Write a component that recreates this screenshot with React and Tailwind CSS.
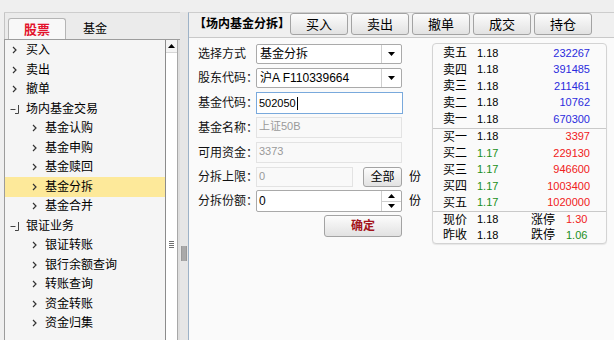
import React from 'react';

const tree = [
  { t: '买入', lvl: 1 },
  { t: '卖出', lvl: 1 },
  { t: '撤单', lvl: 1 },
  { t: '场内基金交易', lvl: 1, open: true },
  { t: '基金认购', lvl: 2 },
  { t: '基金申购', lvl: 2 },
  { t: '基金赎回', lvl: 2 },
  { t: '基金分拆', lvl: 2, sel: true },
  { t: '基金合并', lvl: 2 },
  { t: '银证业务', lvl: 1, open: true },
  { t: '银证转账', lvl: 2 },
  { t: '银行余额查询', lvl: 2 },
  { t: '转账查询', lvl: 2 },
  { t: '资金转账', lvl: 2 },
  { t: '资金归集', lvl: 2 },
];

const sells = [
  ['卖五', '1.18', '232267'],
  ['卖四', '1.18', '391485'],
  ['卖三', '1.18', '211461'],
  ['卖二', '1.18', '10762'],
  ['卖一', '1.18', '670300'],
];

const buys = [
  ['买一', '1.18', '3397', 'text-black'],
  ['买二', '1.17', '229130', 'text-[#1b8f1b]'],
  ['买三', '1.17', '946600', 'text-[#1b8f1b]'],
  ['买四', '1.17', '1003400', 'text-[#1b8f1b]'],
  ['买五', '1.17', '1020000', 'text-[#1b8f1b]'],
];

const Chevron = () => (
  <svg width="5" height="8" viewBox="0 0 5 8">
    <path d="M1 1 L4 4 L1 7" fill="none" stroke="#333" strokeWidth="1.2" />
  </svg>
);

const Collapse = () => (
  <svg width="10" height="10" viewBox="0 0 10 10">
    <path d="M0.5 5.5 H5.5 M8.5 1 V9.5 H5" fill="none" stroke="#444" strokeWidth="1" />
  </svg>
);

const TreeRow = ({ item }) => (
  <div className={`h-[19.5px] flex items-center text-[12px] text-black ${item.sel ? 'bg-[#fde99a]' : ''}`}>
    {item.lvl === 1 ? (
      <div className="w-[21px] flex items-center pl-[5px]">
        {item.open ? <Collapse /> : <span className="pl-[2px] flex"><Chevron /></span>}
      </div>
    ) : (
      <div className="w-[40px] flex items-center pl-[27px]">
        <Chevron />
      </div>
    )}
    <span className="leading-none">{item.t}</span>
  </div>
);

const Btn = ({ children, className = '' }) => (
  <button
    className={`rounded-[3px] border border-[#a3a3a3] bg-linear-to-b from-[#fcfcfc] to-[#e2e2e2] leading-none flex items-center justify-center ${className}`}
  >
    {children}
  </button>
);

const DownArrow = () => (
  <svg width="7" height="4" viewBox="0 0 7 4">
    <polygon points="0,0 7,0 3.5,4" fill="#000" />
  </svg>
);

const UpArrow = () => (
  <svg width="7" height="4" viewBox="0 0 7 4">
    <polygon points="0,4 7,4 3.5,0" fill="#000" />
  </svg>
);

const Select = ({ children }) => (
  <div className="w-[146px] h-[20px] flex border border-[#aaaaaa] rounded-[2px] bg-white">
    <div className="flex-1 flex items-center pl-[3px] text-[12px] leading-none">{children}</div>
    <div className="w-[20px] border-l border-[#cfcfcf] flex items-center justify-center">
      <DownArrow />
    </div>
  </div>
);

const Label = ({ children }) => (
  <div className="w-[58px] shrink-0 whitespace-nowrap text-[12px] leading-none text-[#111]">{children}</div>
);

const Dim = ({ children, w = 'w-[146px]' }) => (
  <div className={`${w} shrink-0 h-full border border-[#e3e3e3] bg-[#f9f9f9] text-[11px] text-[#9a9a9a] pl-[2px] pt-[3px] leading-none`}>
    {children}
  </div>
);

const QuoteRow = ({ label, price, vol, priceCls = 'text-black', volCls }) => (
  <div className="h-[16.5px] flex items-center pl-[10px] pr-[16px]">
    <span className="w-[34px] text-[12px] leading-none">{label}</span>
    <span className={`w-[40px] text-[11px] leading-none ${priceCls}`}>{price}</span>
    <span className={`flex-1 text-right text-[11px] leading-none ${volCls}`}>{vol}</span>
  </div>
);

export default function App() {
  return (
    <div className="w-[614px] h-[340px] bg-[#efefef] flex pt-[12px] pl-[4px] overflow-hidden font-['Liberation_Sans','Noto_Sans_CJK_SC',sans-serif]">
      {/* left: menu */}
      <div className="w-[176px] flex flex-col border-t border-[#cdcdcd]">
        <div className="h-[26px] bg-[#ebebeb] border-l border-[#c4c4c4] flex items-end pl-[3px]">
          <div className="w-[58px] h-[21px] rounded-t-[3px] border border-b-0 border-[#b5b5b5] bg-[#f8f8f8] flex items-center justify-center text-[13px] font-bold text-[#e3132c] leading-none">
            股票
          </div>
          <div className="w-[58px] h-[21px] flex items-center justify-center text-[12px] text-black leading-none">
            基金
          </div>
        </div>
        <div className="flex-1 flex border-t border-l border-[#9c9c9c]">
          <div className="w-[160px] bg-[#f5f5f5] pt-[0.5px]">
            {tree.map((item) => (
              <TreeRow key={item.t} item={item} />
            ))}
          </div>
          <div className="w-[12px] border-l border-[#8c8c8c] bg-white flex flex-col items-center">
            <div className="w-full h-[13px] flex items-center justify-center bg-[#f4f4f4] border-b border-[#d6d6d6]">
              <UpArrow />
            </div>
            <div className="mt-[188px] flex flex-col gap-[1px]">
              <div className="w-[5px] h-[1px] bg-[#707070]" />
              <div className="w-[5px] h-[1px] bg-[#707070]" />
              <div className="w-[5px] h-[1px] bg-[#707070]" />
              <div className="w-[5px] h-[1px] bg-[#707070]" />
            </div>
          </div>
          <div className="w-[3px] border-l border-[#a8a8a8] bg-[#dedede]" />
        </div>
      </div>

      {/* splitter */}
      <div className="w-[8px] bg-[#e6e6e6] pt-[234px] pl-[1px]">
        <div className="w-[6px] h-[15px] bg-[#a9a9a9] border-x border-[#9a9a9a]" />
      </div>

      {/* right: form */}
      <div className="flex-1 flex flex-col border-t border-l border-t-[#cdcdcd] border-l-[#9db2c7] bg-[#fafafa]">
        <div className="h-[25px] bg-[#f0f0f0] border-b border-[#c9c9c9] flex items-start pl-[5px]">
          <div className="w-[96px] h-[22px] flex items-center text-[12px] font-bold leading-none whitespace-nowrap">【场内基金分拆】</div>
          <div className="flex gap-[3px]">
            {['买入', '卖出', '撤单', '成交', '持仓'].map((b) => (
              <Btn key={b} className="w-[58px] h-[22px] text-[13px]">
                {b}
              </Btn>
            ))}
          </div>
        </div>

        <div className="flex-1 flex">
          <div className="w-[243px] pl-[9px] flex flex-col">
            <div className="h-[20px] mt-[6px] flex items-center">
              <Label>选择方式</Label>
              <Select>基金分拆</Select>
            </div>
            <div className="h-[20px] mt-[4px] flex items-center">
              <Label>股东代码：</Label>
              <Select>沪A F110339664</Select>
            </div>
            <div className="h-[22px] mt-[4px] flex items-center">
              <Label>基金代码：</Label>
              <div className="w-[147px] shrink-0 h-full border border-[#79a9dc] bg-white flex items-center pl-[2px] text-[11px] leading-none">
                502050
                <span className="w-[1px] h-[13px] bg-black ml-[1px]" />
              </div>
            </div>
            <div className="h-[21px] mt-[3px] flex items-center">
              <Label>基金名称：</Label>
              <Dim>上证50B</Dim>
            </div>
            <div className="h-[21px] mt-[4px] flex items-center">
              <Label>可用资金：</Label>
              <Dim>3373</Dim>
            </div>
            <div className="h-[20px] mt-[4px] flex items-center">
              <Label>分拆上限：</Label>
              <Dim w="w-[97px]">0</Dim>
              <Btn className="ml-[10px] shrink-0 w-[39px] h-[20px] text-[12px]">全部</Btn>
              <span className="ml-[7px] text-[12px] leading-none">份</span>
            </div>
            <div className="h-[22px] mt-[3px] flex items-center">
              <Label>分拆份额：</Label>
              <div className="w-[146px] shrink-0 h-full flex border border-[#a9a9a9] rounded-[2px] bg-white">
                <div className="flex-1 flex items-center pl-[2px] text-[12px] leading-none">0</div>
                <div className="w-[20px] border-l border-[#cfcfcf] flex flex-col">
                  <div className="flex-1 flex items-center justify-center border-b border-[#cfcfcf]">
                    <UpArrow />
                  </div>
                  <div className="flex-1 flex items-center justify-center">
                    <DownArrow />
                  </div>
                </div>
              </div>
              <span className="ml-[7px] text-[12px] leading-none">份</span>
            </div>
            <div className="h-[22px] mt-[3px] flex items-center">
              <Btn className="ml-[126px] w-[78px] h-[22px] text-[12px] font-bold text-[#a3141a]">确定</Btn>
            </div>
          </div>

          {/* quote panel */}
          <div className="w-[175px] h-[201px] mt-[5px] border border-[#d3d3d3] rounded-[4px] bg-[#fafafa] shadow-[0_1px_1px_rgba(0,0,0,0.08)] flex flex-col">
            <div className="pt-[1px] border-b border-[#c9c9c9]">
              {sells.map(([l, p, v]) => (
                <QuoteRow key={l} label={l} price={p} vol={v} volCls="text-[#2b2bdd]" />
              ))}
            </div>
            <div className="border-b border-[#c9c9c9]">
              {buys.map(([l, p, v, c]) => (
                <QuoteRow key={l} label={l} price={p} vol={v} priceCls={c} volCls="text-[#f02020]" />
              ))}
            </div>
            <div className="h-[15.5px] flex items-center pl-[10px] text-[12px] leading-none">
              <span className="w-[34px]">现价</span>
              <span className="w-[54px] text-[11px]">1.18</span>
              <span className="w-[35px]">涨停</span>
              <span className="text-[11px] text-[#f02020]">1.30</span>
            </div>
            <div className="h-[15.5px] flex items-center pl-[10px] text-[12px] leading-none">
              <span className="w-[34px]">昨收</span>
              <span className="w-[54px] text-[11px]">1.18</span>
              <span className="w-[35px]">跌停</span>
              <span className="text-[11px] text-[#1b8f1b]">1.06</span>
            </div>
          </div>
        </div>
      </div>
    </div>
  );
}
